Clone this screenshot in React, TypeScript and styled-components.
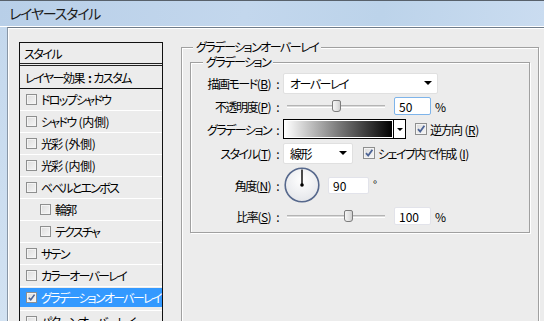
import React from "react";
import styled, { createGlobalStyle } from "styled-components";

const FONT = `"Noto Sans CJK JP", "Noto Sans", sans-serif`;

const GlobalStyle = createGlobalStyle`
  html, body {
    margin: 0;
    padding: 0;
    background: #ececec;
  }
  body {
    font-family: ${FONT};
    font-size: 12px;
    letter-spacing: -1.5px;
    color: #000;
    font-feature-settings: "palt";
  }
`;

interface StyleItem {
  label: string;
  note?: string;
  indent?: boolean;
  checked?: boolean;
  selected?: boolean;
}

const LIST_ITEMS: StyleItem[] = [
  { label: "ドロップシャドウ" },
  { label: "シャドウ", note: "内側" },
  { label: "光彩", note: "外側" },
  { label: "光彩", note: "内側" },
  { label: "ベベルとエンボス" },
  { label: "輪郭", indent: true },
  { label: "テクスチャ", indent: true },
  { label: "サテン" },
  { label: "カラーオーバーレイ" },
  { label: "グラデーションオーバーレイ", checked: true, selected: true },
  { label: "パターンオーバーレイ" },
];

const CheckBox: React.FC<{ checked?: boolean; size?: number }> = ({
  checked,
  size = 11,
}) => (
  <Box $size={size}>
    {checked && (
      <svg width={size - 2} height={size - 2} viewBox="0 0 10 10">
        <path
          d="M2 5.2 L4.2 7.6 L8.4 1.8"
          fill="none"
          stroke="#4d6496"
          strokeWidth="1.8"
        />
      </svg>
    )}
  </Box>
);

const Slider: React.FC<{ value: number }> = ({ value }) => (
  <SliderWrap>
    <Track />
    <Thumb style={{ left: `${value}px` }} />
  </SliderWrap>
);

const Label: React.FC<{ text: string; accessKey?: string }> = ({
  text,
  accessKey,
}) => (
  <LabelCell>
    {text}
    {accessKey && (
      <Key>
        (<u>{accessKey}</u>)
      </Key>
    )}
    <Colon>:</Colon>
  </LabelCell>
);

const App: React.FC = () => {
  return (
    <Window>
      <GlobalStyle />
      <TitleBar>レイヤースタイル</TitleBar>
      <Body>
        <SideFrame />
        <Client>
          <StyleList>
            <ListHeader>スタイル</ListHeader>
            <ListSubHeader>
              レイヤー効果<NarrowColon>:</NarrowColon>カスタム
            </ListSubHeader>
            {LIST_ITEMS.map((item, idx) => (
              <ListItem
                key={`list-item-${idx}`}
                $indent={item.indent}
                $selected={item.selected}
              >
                <CheckBox checked={item.checked} />
                <ItemText>
                  {item.label}
                  {item.note && <Note>({item.note})</Note>}
                </ItemText>
              </ListItem>
            ))}
          </StyleList>

          <OuterGroup>
            <OuterLegend>グラデーションオーバーレイ</OuterLegend>
            <InnerGroup>
              <InnerLegend>グラデーション</InnerLegend>
              <Form>
                <Row $h={22}>
                  <Label text="描画モード" accessKey="B" />
                  <Controls>
                    <Select $w={155}>
                      オーバーレイ
                      <Arrow />
                    </Select>
                  </Controls>
                </Row>
                <Row $h={24}>
                  <Label text="不透明度" accessKey="P" />
                  <Controls>
                    <Slider value={49} />
                    <NumberBox $focused $w={37}>
                      50
                    </NumberBox>
                    <Unit>%</Unit>
                  </Controls>
                </Row>
                <Row $h={22}>
                  <Label text="グラデーション" />
                  <Controls>
                    <GradientPicker>
                      <GradientBar />
                      <GradientButton>
                        <Arrow $small />
                      </GradientButton>
                    </GradientPicker>
                    <CheckLabel $gap={9}>
                      <CheckBox checked size={12} />
                      逆方向<Key>(<u>R</u>)</Key>
                    </CheckLabel>
                  </Controls>
                </Row>
                <Row $h={26}>
                  <Label text="スタイル" accessKey="T" />
                  <Controls>
                    <Select $w={70}>
                      線形
                      <Arrow />
                    </Select>
                    <CheckLabel $gap={10}>
                      <CheckBox checked size={12} />
                      シェイプ内で作成<Key>(<u>I</u>)</Key>
                    </CheckLabel>
                  </Controls>
                </Row>
                <Row $h={38}>
                  <Label text="角度" accessKey="N" />
                  <Controls>
                    <Dial>
                      <svg width="36" height="36" viewBox="0 0 36 36">
                        <defs>
                          <radialGradient id="dialFill" cx="50%" cy="35%" r="65%">
                            <stop offset="0%" stopColor="#ffffff" />
                            <stop offset="100%" stopColor="#e4e6ea" />
                          </radialGradient>
                        </defs>
                        <circle
                          cx="18"
                          cy="18"
                          r="16.8"
                          fill="url(#dialFill)"
                          stroke="#56688c"
                          strokeWidth="1.6"
                        />
                        <line
                          x1="18"
                          y1="18"
                          x2="18"
                          y2="2.5"
                          stroke="#000"
                          strokeWidth="1.4"
                        />
                        <circle cx="18" cy="18" r="1.8" fill="#000" />
                      </svg>
                    </Dial>
                    <NumberBox $w={41} $h={17}>
                      90
                    </NumberBox>
                    <Degree>°</Degree>
                  </Controls>
                </Row>
                <Row $h={24}>
                  <Label text="比率" accessKey="S" />
                  <Controls>
                    <Slider value={61} />
                    <NumberBox $w={37}>100</NumberBox>
                    <Unit>%</Unit>
                  </Controls>
                </Row>
              </Form>
            </InnerGroup>
          </OuterGroup>
        </Client>
      </Body>
    </Window>
  );
};

const Window = styled.div`
  width: 544px;
  height: 321px;
  overflow: hidden;
  display: flex;
  flex-direction: column;
  background: #ececec;
`;
const TitleBar = styled.div`
  height: 27px;
  box-sizing: border-box;
  flex-shrink: 0;
  display: flex;
  align-items: center;
  padding: 0 0 1px 9px;
  border-top: 1px solid #58616b;
  border-bottom: 1px solid #ffffff;
  background: linear-gradient(
    100deg,
    #b8cfe8 0%,
    #c3d7ed 45%,
    #bcd3ea 70%,
    #cadcf0 100%
  );
  font-size: 14px;
  letter-spacing: -1.2px;
  color: #1b1b1b;
`;
const Body = styled.div`
  flex: 1;
  display: flex;
  min-height: 0;
`;
const SideFrame = styled.div`
  width: 7px;
  flex-shrink: 0;
  background: linear-gradient(180deg, #c4d8ed 0%, #d2e2f2 100%);
`;
const Client = styled.div`
  flex: 1;
  display: flex;
  align-items: flex-start;
  gap: 18px;
  padding: 12px 5px 0 11px;
  background: #ececec;
  border-top: 1px solid #6f7c8a;
  border-left: 1px solid #8896a6;
  box-shadow: inset 1px 1px 0 #ffffff;
`;
const StyleList = styled.div`
  width: 144px;
  flex-shrink: 0;
  box-sizing: border-box;
  margin-top: 2px;
  border: 1px solid #111;
  display: flex;
  flex-direction: column;
`;
const ListHeader = styled.div`
  height: 20px;
  display: flex;
  align-items: center;
  padding-left: 4px;
  border-bottom: 3px double #222;
`;
const ListSubHeader = styled.div`
  height: 22px;
  display: flex;
  align-items: center;
  padding-left: 5px;
  border-bottom: 1px solid #111;
  white-space: nowrap;
`;
const NarrowColon = styled.span`
  margin: 0 3px 0 4px;
  font-weight: bold;
`;
const ListItem = styled.div<{ $indent?: boolean; $selected?: boolean }>`
  height: 21px;
  flex-shrink: 0;
  display: flex;
  align-items: center;
  gap: 4px;
  padding-left: ${({ $indent }) => ($indent ? 20 : 6)}px;
  padding-bottom: ${({ $selected }) => ($selected ? 2 : 0)}px;
  border-bottom: 1px solid #ffffff;
  letter-spacing: -1.7px;
  color: ${({ $selected }) => ($selected ? "#ffffff" : "#000")};
  background: ${({ $selected }) => ($selected ? "#3399ff" : "transparent")};
  box-shadow: ${({ $selected }) =>
    $selected ? "inset 0 1px 0 #ececec, inset 0 -3px 0 #ececec" : "none"};
`;
const ItemText = styled.span`
  white-space: nowrap;
`;
const Note = styled.span`
  margin-left: 3px;
  letter-spacing: -0.3px;
`;
const Box = styled.span<{ $size: number }>`
  width: ${({ $size }) => $size}px;
  height: ${({ $size }) => $size}px;
  box-sizing: border-box;
  flex-shrink: 0;
  display: inline-flex;
  align-items: center;
  justify-content: center;
  border: 1px solid #8e8f8f;
  background: linear-gradient(135deg, #dcdcdc 0%, #f6f6f6 100%);
  box-shadow: inset 0 0 0 1px #f4f4f4;
`;
const OuterGroup = styled.fieldset`
  flex: 1;
  margin: 0;
  padding: 1px 8px 120px 8px;
  min-width: 0;
  border: 1px solid #a0a0a0;
  box-shadow: 1px 1px 0 #ffffff, inset 1px 1px 0 #ffffff;
`;
const OuterLegend = styled.legend`
  margin-left: 3px;
  padding: 0 3px;
  line-height: 14px;
  background: #ececec;
`;
const InnerGroup = styled.fieldset`
  margin: 0;
  padding: 3px 8px 4px 8px;
  min-width: 0;
  border: 1px solid #a0a0a0;
  box-shadow: 1px 1px 0 #ffffff, inset 1px 1px 0 #ffffff;
`;
const InnerLegend = styled.legend`
  margin-left: 4px;
  padding: 0 3px;
  line-height: 14px;
  background: #ececec;
`;
const Form = styled.div`
  display: flex;
  flex-direction: column;
`;
const Row = styled.div<{ $h: number }>`
  height: ${({ $h }) => $h}px;
  display: grid;
  grid-template-columns: 79px 1fr;
  column-gap: 5px;
  align-items: center;
`;
const LabelCell = styled.div`
  display: flex;
  justify-content: flex-end;
  align-items: center;
  white-space: nowrap;
`;
const Key = styled.span`
  letter-spacing: -0.5px;
`;
const Colon = styled.span`
  margin-left: 5px;
`;
const Controls = styled.div`
  display: flex;
  align-items: center;
`;
const Select = styled.div<{ $w: number }>`
  width: ${({ $w }) => $w}px;
  height: 21px;
  box-sizing: border-box;
  display: flex;
  align-items: center;
  justify-content: space-between;
  padding: 0 5px 0 6px;
  background: #ffffff;
  border: 1px solid #e0e0e0;
  border-radius: 2px;
`;
const Arrow = styled.span<{ $small?: boolean }>`
  width: 0;
  height: 0;
  border-left: ${({ $small }) => ($small ? 3 : 4)}px solid transparent;
  border-right: ${({ $small }) => ($small ? 3 : 4)}px solid transparent;
  border-top: ${({ $small }) => ($small ? 3 : 4)}px solid #000;
`;
const SliderWrap = styled.div`
  position: relative;
  width: 103px;
  height: 14px;
  display: flex;
  align-items: center;
`;
const Track = styled.div`
  margin-left: 4px;
  width: 98px;
  height: 3px;
  box-sizing: border-box;
  border-top: 1px solid #b4b4b4;
  border-bottom: 1px solid #ffffff;
  background: #dadada;
`;
const Thumb = styled.div`
  position: absolute;
  top: 1px;
  width: 9px;
  height: 12px;
  box-sizing: border-box;
  border: 1px solid #7c7c7c;
  border-radius: 2px 2px 3px 3px;
  background: linear-gradient(90deg, #f5f5f5 0%, #e2e2e2 60%, #cfcfcf 100%);
`;
const NumberBox = styled.div<{ $w: number; $h?: number; $focused?: boolean }>`
  width: ${({ $w }) => $w}px;
  height: ${({ $h = 18 }) => $h}px;
  box-sizing: border-box;
  margin-left: 8px;
  padding-left: 4px;
  display: flex;
  align-items: center;
  background: #ffffff;
  border: 1px solid ${({ $focused }) => ($focused ? "#7eb4ea" : "#e2e3ea")};
  border-radius: 2px;
  font-size: 12px;
  letter-spacing: 0;
`;
const Unit = styled.span`
  margin-left: 4px;
  font-size: 12px;
  letter-spacing: 0;
`;
const Degree = styled.span`
  margin-left: 4px;
  align-self: flex-start;
  margin-top: 9px;
  font-size: 11px;
`;
const GradientPicker = styled.div`
  width: 123px;
  height: 20px;
  box-sizing: border-box;
  display: flex;
  border: 1px solid #000;
  background: #ffffff;
`;
const GradientBar = styled.div`
  flex: 1;
  margin: 1px;
  background: linear-gradient(90deg, #ffffff 0%, #7a7a7a 50%, #000000 100%);
`;
const GradientButton = styled.div`
  width: 11px;
  display: flex;
  align-items: center;
  justify-content: center;
  border-left: 1px solid #000;
  background: #ffffff;
`;
const CheckLabel = styled.label<{ $gap: number }>`
  margin-left: ${({ $gap }) => $gap}px;
  display: flex;
  align-items: center;
  gap: 3px;
  white-space: nowrap;
`;
const Dial = styled.div`
  width: 36px;
  height: 36px;
  margin-left: 1px;
  display: flex;
`;

export default App;
